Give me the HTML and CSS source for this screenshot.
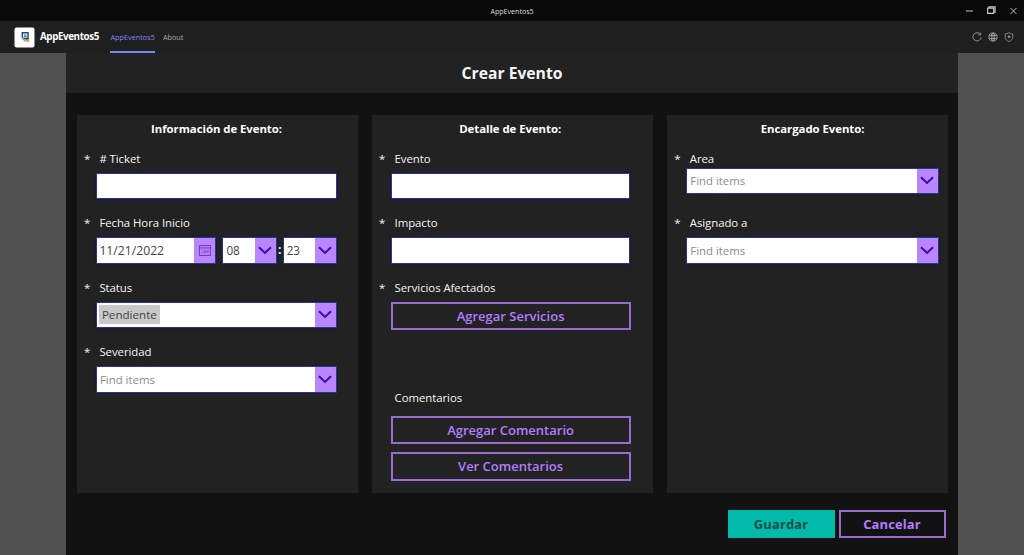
FILE: index.html
```html
<!DOCTYPE html>
<html lang="es">
<head>
<meta charset="utf-8">
<title>AppEventos5</title>
<link rel="stylesheet" href="styles.css">
</head>
<body>
<svg class="defs" aria-hidden="true">
  <symbol id="chevron" viewBox="0 0 14 9"><path d="M1 1.3 7 7 13 1.3" fill="none" stroke="#4304b0" stroke-width="1.9"/></symbol>
</svg>
<div class="titlebar">
  <span class="window-title">AppEventos5</span>
  <div class="window-controls">
    <svg width="7" height="10" viewBox="0 0 7 10"><path d="M0 5H7" stroke="#bbb" stroke-width="1.1"/></svg>
    <svg width="9" height="9" viewBox="0 0 9 9"><path d="M.6 2.1H6.7V7.4H.6ZM2 1.7V.8H8.1V6.3H7" fill="none" stroke="#ccc" stroke-width="1.1"/></svg>
    <svg width="7" height="8" viewBox="0 0 7 8"><path d="M.4.9 6.6 7.1M6.6.9.4 7.1" stroke="#bbb"/></svg>
  </div>
</div>
<header class="appbar">
  <svg class="logo" width="21" height="21" viewBox="0 0 21 21"><rect x=".5" y=".5" width="20" height="20" rx="2" fill="#fff"/><path d="M8.3 10.3V5.7H14V11.3H12" fill="none" stroke="#25486a" stroke-width="1.4"/><path d="M10 7.5H12.4V10H10Z" fill="#4f93bd"/><path d="M7 10 11.5 10.8 14.6 11.6V12.8L11 12.4Z" fill="#254b68"/><path d="M6.5 10.8 12 13 11 14.4Z" fill="#42a3ca"/><path d="M11.5 13 15.7 12.6 14.8 15 10.5 14.2Z" fill="#e7a047"/></svg>
  <strong class="app-name">AppEventos5</strong>
  <nav class="tabs"><a class="tab active">AppEventos5</a><a class="tab about">About</a></nav>
  <div class="app-actions">
    <svg width="10" height="10" viewBox="0 0 10 10" fill="none" stroke="#999" stroke-width=".9"><path d="M8.3 2.4A4.1 4.1 0 1 0 9.1 5M8.6.6V2.9H6.3"/></svg>
    <svg width="10" height="10" viewBox="0 0 10 10" fill="none" stroke="#aaa" stroke-width=".8"><circle cx="5" cy="5" r="4.1"/><ellipse cx="5" cy="5" rx="1.8" ry="4.1"/><path d="M1.3 3.5H8.7M1.3 6.5H8.7M5 1V9"/></svg>
    <svg width="10" height="10" viewBox="0 0 10 10" fill="none" stroke="#999" stroke-width=".8"><path d="M5 .6C6.2 1.5 7.4 1.8 8.8 1.8V5C8.8 7.2 7.3 8.7 5 9.5 2.7 8.7 1.2 7.2 1.2 5V1.8C2.6 1.8 3.8 1.5 5 .6Z"/><circle cx="5" cy="4.7" r=".9" fill="#999"/></svg>
  </div>
</header>
<div class="stage">
<main class="page">
  <h1 class="page-title">Crear Evento</h1>
  <div class="cards">
    <section class="card info">
      <h2>Información de Evento:</h2>
      <div class="field"><div class="label"><i>*</i><span># Ticket</span></div><div class="control wide"></div></div>
      <div class="field"><div class="label"><i>*</i><span>Fecha Hora Inicio</span></div>
        <div class="datetime">
          <div class="control date"><span class="value">11/21/2022</span><span class="drop"><svg width="12" height="11" viewBox="0 0 12 11" fill="none" stroke="#6b30cf" stroke-width=".9"><path d="M.5.5H11.5V10.5H.5ZM.5 2.9H11.5"/><path d="M2.3 5H3.6M5 5H6.3M7.7 5V7.2H9.2V4.7M2.3 7.8H3.6M5 8V6.6H6.3V8.2" stroke-width=".7"/></svg></span></div>
          <div class="control hour"><span class="value">08</span><span class="drop"><svg width="14" height="9"><use href="#chevron"/></svg></span></div>
          <b class="colon">:</b>
          <div class="control minute"><span class="value">23</span><span class="drop"><svg width="14" height="9"><use href="#chevron"/></svg></span></div>
        </div>
      </div>
      <div class="field"><div class="label"><i>*</i><span>Status</span></div><div class="control wide"><span class="tag">Pendiente</span><span class="drop"><svg width="14" height="9"><use href="#chevron"/></svg></span></div></div>
      <div class="field"><div class="label"><i>*</i><span>Severidad</span></div><div class="control wide"><span class="hint">Find items</span><span class="drop"><svg width="14" height="9"><use href="#chevron"/></svg></span></div></div>
    </section>
    <section class="card detail">
      <h2>Detalle de Evento:</h2>
      <div class="field"><div class="label"><i>*</i><span>Evento</span></div><div class="control medium"></div></div>
      <div class="field"><div class="label"><i>*</i><span>Impacto</span></div><div class="control medium"></div></div>
      <div class="field services"><div class="label"><i>*</i><span>Servicios Afectados</span></div><button class="outline">Agregar Servicios</button></div>
      <div class="field comments"><div class="label"><i></i><span>Comentarios</span></div><button class="outline">Agregar Comentario</button><button class="outline">Ver Comentarios</button></div>
    </section>
    <section class="card owner">
      <h2>Encargado Evento:</h2>
      <div class="field tight"><div class="label"><i>*</i><span>Area</span></div><div class="control"><span class="hint">Find items</span><span class="drop"><svg width="14" height="9"><use href="#chevron"/></svg></span></div></div>
      <div class="field"><div class="label"><i>*</i><span>Asignado a</span></div><div class="control"><span class="hint">Find items</span><span class="drop"><svg width="14" height="9"><use href="#chevron"/></svg></span></div></div>
    </section>
  </div>
  <footer class="actions"><button class="save">Guardar</button><button class="outline cancel">Cancelar</button></footer>
</main>
</div>
</body>
</html>
```
FILE: styles.css
```css
* { box-sizing: border-box; }
body { margin: 0; height: 555px; overflow: hidden; display: flex; flex-direction: column; background: #121212; color: #f4f4f4; font-family: "Open Sans", "Noto Sans", sans-serif; }
.defs { display: none; }
svg { display: block; flex: none; }
.titlebar { height: 21px; flex: none; display: grid; grid-template-columns: 1fr auto 1fr; align-items: center; background: #090909; }
.window-title { grid-column: 2; font-size: 7.1px; line-height: 10px; color: #ddd; }
.window-controls { display: flex; justify-content: flex-end; align-items: center; gap: 14px; padding-right: 7px; }
.appbar { height: 32px; flex: none; display: flex; align-items: center; padding: 0 10px 0 14px; background: #1f1f1f; }
.app-name { width: 60px; margin-left: 5px; font-size: 9.8px; line-height: 14px; letter-spacing: -.4px; color: #fff; white-space: nowrap; }
.tabs { display: flex; align-self: stretch; gap: 8px; margin-left: 10.4px; }
.tab { font-size: 7.3px; line-height: 33px; color: #aaa; height: 32px; }
.tab.active { width: 44.5px; color: #7f85f5; border-bottom: 2px solid #7f85f5; white-space: nowrap; }
.app-actions { display: flex; gap: 6px; margin-left: auto; }
.stage { flex: 1; background: #515151; display: flex; justify-content: center; }
.page { width: 892px; background: #121212; }
.page-title { height: 39.5px; margin: 0; background: #222; font-size: 15.7px; line-height: 40px; text-align: center; font-weight: 700; }
.cards { display: grid; grid-template-columns: repeat(3, 281px); gap: 14.2px; padding: 22px 0 0 10.5px; }
.card { height: 378.5px; background: #222; padding: 0 19.4px; }
.card h2 { height: 35px; margin: 0; font-size: 11.4px; letter-spacing: -.05px; line-height: 27px; font-weight: 700; text-align: center; color: #fff; }
.info h2 { padding-right: 1px; }
.detail h2 { padding-right: 4px; }
.field { height: 64.5px; display: flex; flex-direction: column; gap: 5px; }
.field.tight { gap: 0; }
.label { height: 18px; flex: none; display: flex; font-size: 11.4px; letter-spacing: -.06px; line-height: 18px; margin-left: -12px; }
.label i { width: 15.5px; font-style: normal; }
.control { height: 26.5px; flex: none; display: flex; align-items: center; background: #fff; border: 1px solid #2b358c; outline: 1px solid rgba(16, 24, 85, .45); color: #444; font-size: 12px; }
.control.wide { width: 241px; }
.control.medium { width: 239px; }
.drop { width: 21px; height: 100%; margin-left: auto; flex: none; display: grid; place-items: center; background: #b986fc; }
.value { padding-left: 3px; }
.hint { color: #8b8b8b; padding-left: 3px; font-size: 11.4px; }
.tag { background: #c8c8c8; color: #444; margin-left: 2px; padding: 0 3px; font-size: 11.6px; line-height: 19px; }
.datetime { display: flex; align-items: center; }
.date { width: 120.5px; margin-right: 6px; }
.date .value { font-size: 12.2px; padding-left: 2.5px; }
.hour, .minute { width: 54.3px; }
.hour .value, .minute .value { font-size: 11.7px; }
.colon { width: 6px; text-align: center; font-size: 12px; line-height: 16px; }
.outline { height: 28.5px; width: 240px; flex: none; padding: 0; background: transparent; border: 2px solid #9b6ad2; color: #b47cff; font: 600 13px/18px "Open Sans", sans-serif; }
.detail .outline { margin-left: -.5px; }
.services { height: 110px; }
.services .label + .outline { margin-top: .4px; }
.comments { gap: 8px; }
.comments .label { margin-bottom: 1px; }
.owner { padding-right: 9px; }
.owner h2 { margin-right: -8px; margin-left: -8px; }
.actions { display: flex; justify-content: flex-end; gap: 4px; padding: 17px 12.5px 0 0; }
.save { width: 107px; height: 28px; padding: 0; border: 0; background: #03baaa; color: #075047; font: 700 13px/18px "Open Sans", sans-serif; letter-spacing: .15px; }
.cancel { width: 107px; height: 28px; font-weight: 700; letter-spacing: .1px; }
```
